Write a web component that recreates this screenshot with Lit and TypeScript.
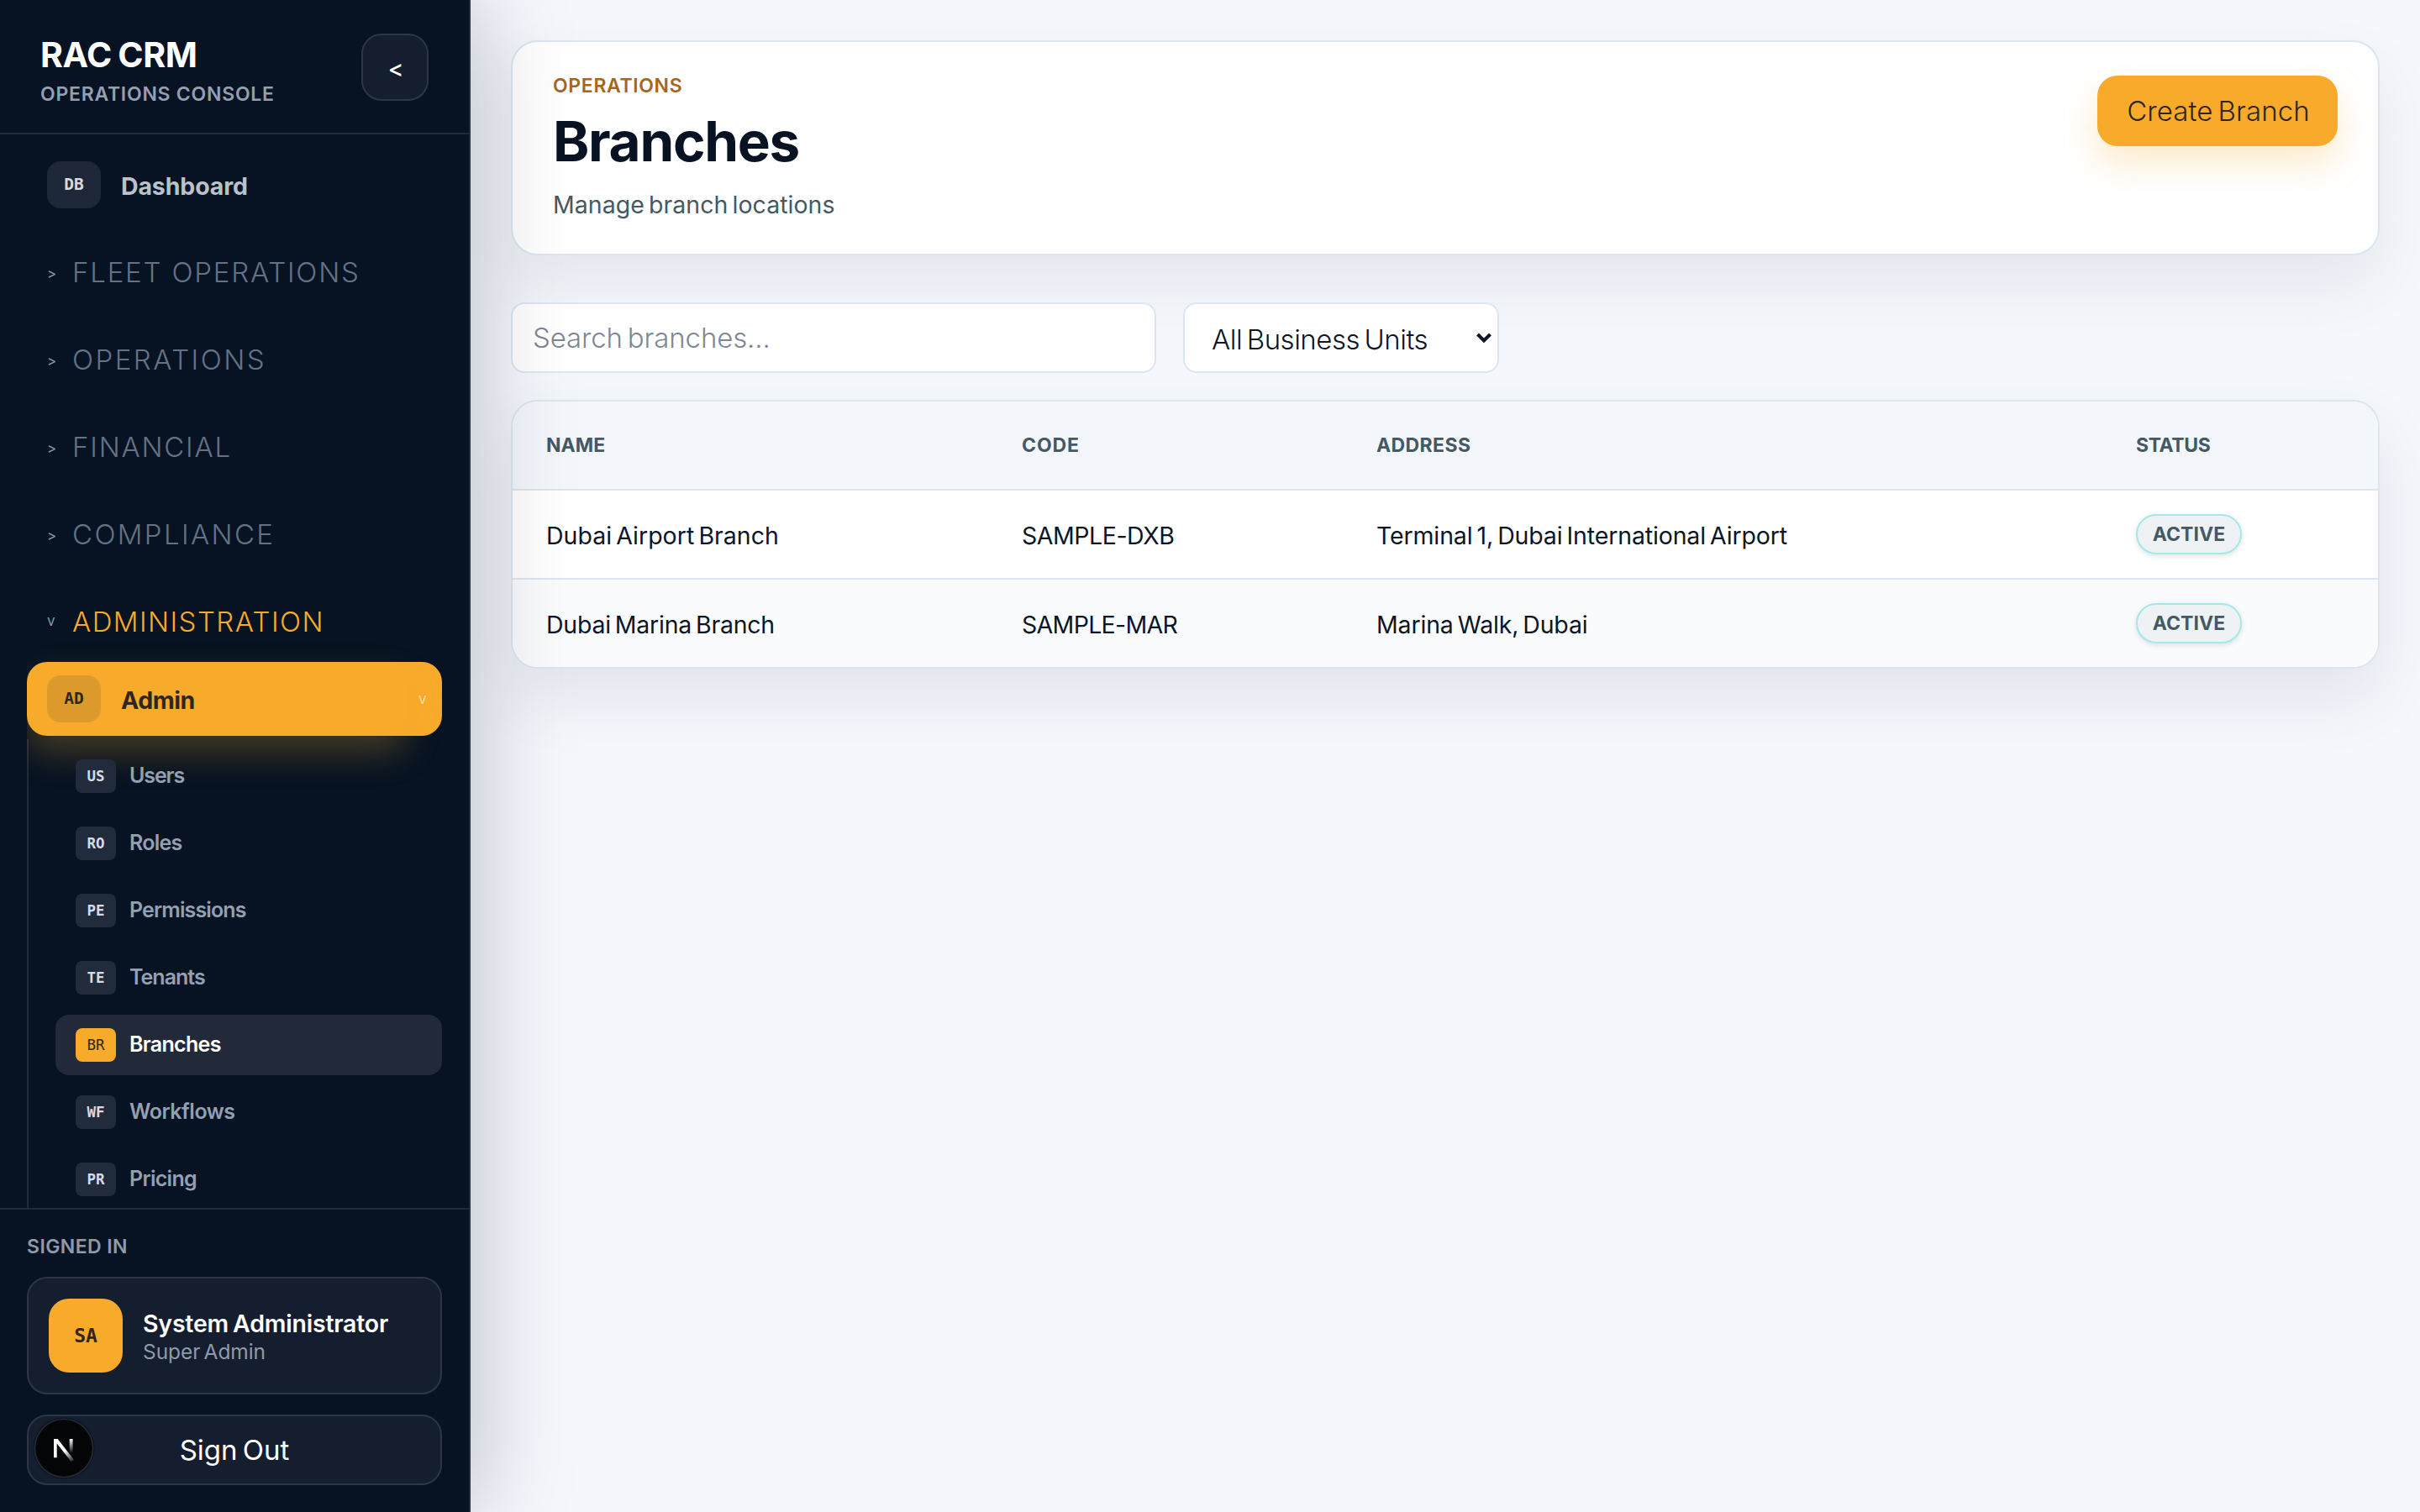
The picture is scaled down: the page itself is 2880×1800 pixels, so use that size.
import { LitElement, html, css, svg } from "lit";
import { customElement, property } from "lit/decorators.js";
import { classMap } from "lit/directives/class-map.js";
import { styleMap } from "lit/directives/style-map.js";

interface Label {
  text: string;
  /** letter spacing in px */
  track: number;
}

interface SubItem extends Label {
  code: string;
  active?: boolean;
}

const GROUPS: (Label & { open?: boolean })[] = [
  { text: "Fleet Operations", track: 1.8 },
  { text: "Operations", track: 2.48 },
  { text: "Financial", track: 1.78 },
  { text: "Compliance", track: 2.36 },
  { text: "Administration", track: 1.43, open: true },
];

const ADMIN_ITEMS: SubItem[] = [
  { code: "US", text: "Users", track: -1.1 },
  { code: "RO", text: "Roles", track: -0.75 },
  { code: "PE", text: "Permissions", track: -0.87 },
  { code: "TE", text: "Tenants", track: -1.0 },
  { code: "BR", text: "Branches", track: -0.68, active: true },
  { code: "WF", text: "Workflows", track: -0.48 },
  { code: "PR", text: "Pricing", track: -0.7 },
];

const HEADERS: Label[] = [
  { text: "Name", track: 0 },
  { text: "Code", track: 0.9 },
  { text: "Address", track: 0.4 },
  { text: "Status", track: -0.4 },
];

const BRANCHES: { cells: Label[]; status: string }[] = [
  {
    cells: [
      { text: "Dubai Airport Branch", track: 0 },
      { text: "SAMPLE-DXB", track: -0.45 },
      { text: "Terminal 1, Dubai International Airport", track: -0.14 },
    ],
    status: "Active",
  },
  {
    cells: [
      { text: "Dubai Marina Branch", track: -0.24 },
      { text: "SAMPLE-MAR", track: -0.68 },
      { text: "Marina Walk, Dubai", track: -0.17 },
    ],
    status: "Active",
  },
];

const label = (l: Label) =>
  html`<span style=${styleMap({ letterSpacing: `${l.track}px` })}>${l.text}</span>`;

@customElement("app-sidebar")
export class AppSidebar extends LitElement {
  static styles = css`
    :host {
      display: flex;
      flex-direction: column;
      box-sizing: border-box;
      width: 560px;
      height: 1800px;
      background: #071322;
      border-right: 2px solid #1f2a39;
      box-shadow: 0 0 112px rgba(7, 19, 34, 0.26);
      color: #fff;
      white-space: nowrap;
    }
    .head {
      display: flex;
      justify-content: space-between;
      align-items: flex-start;
      box-sizing: border-box;
      height: 160px;
      padding: 40px 48px;
      border-bottom: 2px solid #1f2a39;
    }
    .brand {
      font-size: 41px;
      font-weight: 700;
      line-height: 48px;
      letter-spacing: -0.4px;
      word-spacing: -2px;
      padding-top: 1px;
    }
    .tag {
      margin-top: 11px;
      font-size: 23px;
      font-weight: 600;
      line-height: 24px;
      letter-spacing: 0.75px;
      color: #949fb2;
    }
    .collapse {
      box-sizing: border-box;
      width: 80px;
      height: 80px;
      display: grid;
      place-items: center;
      padding: 4px 0 0 2px;
      border: 2px solid #2b3646;
      border-radius: 24px;
      background: #151e2e;
      font-size: 28px;
      font-weight: 500;
    }
    nav {
      flex: 1;
      min-height: 0;
      box-sizing: border-box;
      padding-top: 16px;
      margin: 0 32px;
      overflow: hidden;
    }
    .item {
      display: flex;
      align-items: center;
      gap: 24px;
      height: 88px;
      padding-left: 24px;
      font-size: 28.5px;
      font-weight: 700;
      color: #bbc1c9;
      letter-spacing: -0.13px;
    }
    .item .name {
      padding-top: 2px;
    }
    .chip {
      display: grid;
      place-items: center;
      width: 64px;
      height: 56px;
      box-sizing: border-box;
      padding-bottom: 2px;
      border-radius: 16px;
      background: #1e2737;
      color: #d6dbe3;
      font: 700 19.5px "DejaVu Sans Mono", monospace;
      letter-spacing: 0;
    }
    .group {
      display: flex;
      align-items: center;
      gap: 15px;
      height: 96px;
      margin-bottom: 8px;
      padding-left: 24px;
      font-size: 33px;
      font-weight: 300;
      text-transform: uppercase;
      color: #657285;
    }
    .groups {
      margin-top: 12px;
    }
    .group:last-child {
      margin-bottom: 0;
    }
    .group.open {
      color: #f8aa2a;
    }
    .caret {
      width: 15px;
      font-size: 17px;
      font-weight: 400;
      text-transform: none;
      color: #8d97a7;
      padding-top: 3px;
    }
    .group.open .caret {
      padding: 0 0 2px;
    }
    .current {
      display: grid;
      grid-template-columns: 1fr 42px;
      align-items: center;
      border-radius: 24px;
      background: #f8aa2a;
    }
    .current .item {
      color: #2f2621;
      border-radius: 24px;
      letter-spacing: -0.46px;
      box-shadow: 0 20px 40px rgba(248, 170, 42, 0.25);
    }
    .current .chip {
      background: #dd9a2c;
      color: #2f2621;
    }
    .current .caret {
      margin-left: 14px;
      color: #fcdca6;
      padding: 0;
    }
    .sub {
      display: flex;
      flex-direction: column;
      gap: 8px;
      margin-top: 4px;
      padding: 8px 0 0 32px;
      border-left: 2px solid #1f2a39;
    }
    .link {
      display: flex;
      align-items: center;
      gap: 16px;
      flex: none;
      height: 72px;
      padding-left: 24px;
      border-radius: 16px;
      font-size: 25px;
      font-weight: 600;
      color: #949fb2;
    }
    .link > :last-child {
      padding-bottom: 2px;
    }
    .link .chip {
      width: 48px;
      height: 40px;
      border-radius: 8px;
      padding-bottom: 1px;
      font-size: 17.5px;
      background: #222b3b;
    }
    .link.active {
      background: #222a3a;
      color: #fff;
    }
    .link.active .chip {
      background: #f8aa2a;
      color: #2f2621;
      font-weight: 400;
    }
    .foot {
      box-sizing: border-box;
      height: 362px;
      padding: 32px;
      border-top: 2px solid #1f2a39;
    }
    .signed {
      font-size: 23px;
      font-weight: 600;
      line-height: 24px;
      letter-spacing: 0.42px;
      color: #8f9aac;
    }
    .user,
    .out {
      display: flex;
      align-items: center;
      box-sizing: border-box;
      border: 2px solid #2b3646;
      border-radius: 24px;
      background: #151e2e;
    }
    .user {
      height: 140px;
      margin: 24px 0;
      padding-left: 24px;
      gap: 24px;
    }
    .avatar {
      display: grid;
      place-items: center;
      width: 88px;
      height: 88px;
      border-radius: 24px;
      background: #f8aa2a;
      color: #2f2621;
      font: 700 23px "DejaVu Sans Mono", monospace;
    }
    .who {
      padding-top: 2px;
      font-size: 28.5px;
      font-weight: 600;
      line-height: 36px;
      letter-spacing: -0.2px;
      word-spacing: -2px;
    }
    .role {
      font-size: 24.5px;
      font-weight: 400;
      line-height: 31px;
      letter-spacing: -0.09px;
      word-spacing: -2.5px;
      color: #8f9aac;
    }
    .out {
      position: relative;
      justify-content: center;
      height: 84px;
      font-size: 33px;
      font-weight: 400;
      letter-spacing: -0.02px;
      word-spacing: -3px;
    }
    .dev {
      position: absolute;
      left: 2px;
      top: -2px;
      width: 80px;
      height: 84px;
    }
  `;

  private devBadge() {
    return svg`<svg class="dev" viewBox="36 1684 80 84">
      <defs>
        <linearGradient id="diag" gradientUnits="userSpaceOnUse" x1="77" y1="1727" x2="87" y2="1740">
          <stop offset="0" stop-color="#fff"/><stop offset="1" stop-color="#fff" stop-opacity="0.1"/>
        </linearGradient>
        <linearGradient id="bar" x1="0" y1="0" x2="0" y2="1">
          <stop offset="0" stop-color="#fff"/><stop offset="1" stop-color="#fff" stop-opacity="0"/>
        </linearGradient>
      </defs>
      <circle cx="76" cy="1724" r="36.5" fill="#0a1422"/>
      <circle cx="76" cy="1724" r="34.5" fill="#040507" stroke="#272a30" stroke-width="1.6"/>
      <rect x="82.7" y="1713" width="3.9" height="17" fill="url(#bar)"/>
      <path d="M64 1713h4.6L88 1737.8l-3.1 2.5L67.7 1718.6V1735.3H64z" fill="url(#diag)"/>
    </svg>`;
  }

  render() {
    return html`
      <div class="head">
        <div>
          <div class="brand">RAC CRM</div>
          <div class="tag">OPERATIONS CONSOLE</div>
        </div>
        <div class="collapse">&lt;</div>
      </div>
      <nav>
        <div class="item"><span class="chip">DB</span><span class="name">Dashboard</span></div>
        <div class="groups">
          ${GROUPS.map(
            (g) => html`<div class=${classMap({ group: true, open: !!g.open })}>
              <span class="caret">${g.open ? "v" : ">"}</span>${label(g)}
            </div>`
          )}
        </div>
        <div class="current">
          <div class="item"><span class="chip">AD</span><span class="name">Admin</span></div>
          <span class="caret">v</span>
        </div>
        <div class="sub">
          ${ADMIN_ITEMS.map(
            (s) => html`<div class=${classMap({ link: true, active: !!s.active })}>
              <span class="chip">${s.code}</span>${label(s)}
            </div>`
          )}
        </div>
      </nav>
      <div class="foot">
        <div class="signed">SIGNED IN</div>
        <div class="user">
          <div class="avatar">SA</div>
          <div>
            <div class="who">System Administrator</div>
            <div class="role">Super Admin</div>
          </div>
        </div>
        <div class="out">Sign Out${this.devBadge()}</div>
      </div>
    `;
  }
}

@customElement("branch-table")
export class BranchTable extends LitElement {
  @property({ attribute: false }) rows = BRANCHES;

  static styles = css`
    :host {
      display: block;
      box-sizing: border-box;
      height: 320px;
      border: 2px solid #dde5ee;
      border-radius: 32px;
      background: #fff;
      overflow: hidden;
      box-shadow: 0 36px 80px rgba(7, 19, 34, 0.08);
    }
    .row {
      display: grid;
      grid-template-columns: 566px 422px 904px 1fr;
      align-items: center;
      box-sizing: border-box;
      height: 106px;
      padding-left: 40px;
      border-bottom: 2px solid #dde5ee;
      font-size: 28.5px;
      word-spacing: -2.8px;
      color: #0b1626;
    }
    .row:last-child {
      height: 104px;
      border-bottom: 0;
      background: #fafbfd;
    }
    .row > :not(.badge) {
      padding-top: 3px;
    }
    .row.header {
      background: #f3f6fb;
      font-size: 23px;
      font-weight: 700;
      color: #455963;
      text-transform: uppercase;
    }
    .row.header > :not(.badge) {
      padding-top: 0;
    }
    .badge {
      display: grid;
      place-items: center;
      justify-self: start;
      box-sizing: border-box;
      width: 126px;
      height: 48px;
      border: 2px solid #a3e9e8;
      border-radius: 24px;
      background: #eff2f5;
      box-shadow: 0 2px 6px rgba(7, 19, 34, 0.12);
      font-size: 23px;
      font-weight: 700;
      letter-spacing: 0.05px;
      text-transform: uppercase;
      color: #455963;
    }
  `;

  render() {
    return html`
      <div class="row header">${HEADERS.map(label)}</div>
      ${this.rows.map(
        (r) => html`<div class="row">
          ${r.cells.map(label)}<span class="badge">${r.status}</span>
        </div>`
      )}
    `;
  }
}

@customElement("app-root")
export class AppRoot extends LitElement {
  static styles = css`
    :host {
      display: flex;
      width: 2880px;
      height: 1800px;
      overflow: hidden;
      background: #f4f7fc;
      font-family: Inter, "Liberation Sans", sans-serif;
    }
    app-sidebar {
      flex: none;
      position: relative;
      z-index: 1;
    }
    main {
      flex: 1;
      padding: 48px;
    }
    .hero {
      display: flex;
      justify-content: space-between;
      align-items: flex-start;
      box-sizing: border-box;
      height: 256px;
      padding: 40px 48px;
      border: 2px solid #dde5ee;
      border-radius: 32px;
      background: #fff;
      box-shadow: 0 36px 80px rgba(7, 19, 34, 0.07);
    }
    .eyebrow {
      font-size: 23px;
      font-weight: 600;
      line-height: 24px;
      letter-spacing: 0.65px;
      color: #a8661a;
    }
    h1 {
      margin: 22px 0 26px;
      font-size: 65.6px;
      font-weight: 700;
      line-height: 64px;
      letter-spacing: -1.3px;
      color: #071322;
    }
    .lead {
      font-size: 28.5px;
      line-height: 36px;
      letter-spacing: 0.02px;
      word-spacing: -2.8px;
      color: #455963;
    }
    .create {
      display: grid;
      place-items: center;
      box-sizing: border-box;
      width: 286px;
      height: 84px;
      padding-left: 2px;
      border-radius: 24px;
      background: #f8aa2a;
      box-shadow: 0 20px 40px rgba(248, 170, 42, 0.25);
      font-size: 33px;
      font-weight: 300;
      letter-spacing: 0.1px;
      word-spacing: -3.3px;
      color: #2f2621;
    }
    .filters {
      display: flex;
      gap: 32px;
      margin: 56px 0 32px;
    }
    .search,
    .select {
      display: flex;
      align-items: center;
      box-sizing: border-box;
      height: 84px;
      border: 2px solid #dde5ee;
      border-radius: 16px;
      background: #fff;
      font-size: 33px;
      font-weight: 300;
      word-spacing: -3.3px;
    }
    .search {
      width: 768px;
      padding: 0 24px;
      color: #7f8794;
      letter-spacing: -0.12px;
    }
    .select {
      justify-content: space-between;
      width: 376px;
      padding: 0 6px 0 32px;
      letter-spacing: -0.48px;
      color: #0b1626;
    }
    .select span {
      padding-top: 3px;
    }
    .arrow {
      width: 20px;
      height: 14px;
    }
  `;

  render() {
    return html`
      <app-sidebar></app-sidebar>
      <main>
        <section class="hero">
          <div>
            <div class="eyebrow">OPERATIONS</div>
            <h1>Branches</h1>
            <div class="lead">Manage branch locations</div>
          </div>
          <div class="create">Create Branch</div>
        </section>
        <div class="filters">
          <div class="search">Search branches...</div>
          <div class="select">
            <span>All Business Units</span>
            <svg class="arrow" viewBox="0 0 20 14">
              <path d="M2.5 3 10 10.5 17.5 3" fill="none" stroke="#0b1626" stroke-width="4" />
            </svg>
          </div>
        </div>
        <branch-table></branch-table>
      </main>
    `;
  }
}
